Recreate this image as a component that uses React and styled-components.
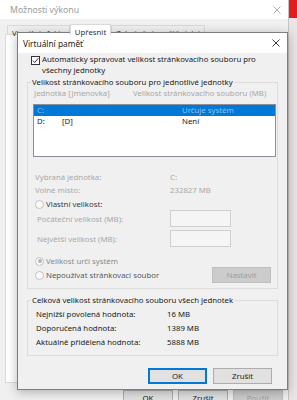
import styled, { createGlobalStyle } from 'styled-components';

const GlobalStyle = createGlobalStyle`
  html, body { margin: 0; padding: 0; }
  body {
    width: 297px;
    height: 400px;
    overflow: hidden;
    background: #ebe5e5;
    font-family: "Noto Sans", "DejaVu Sans", sans-serif;
    font-size: 7.8px;
    color: #1a1a1a;
  }
  * { box-sizing: border-box; }
`;

const Screen = styled.div`
  position: relative;
  display: flex;
  width: 297px;
  height: 400px;
  overflow: hidden;
`;

/* --- window behind (Možnosti výkonu) --- */

const BackWindow = styled.div`
  width: 289px;
  height: 420px;
  flex-shrink: 0;
  display: flex;
  flex-direction: column;
  background: #f0f0f0;
  border-right: 1px solid #c4c4c4;
`;

const BackTitleBar = styled.div`
  height: 19px;
  background: #fff;
  display: flex;
  align-items: center;
  justify-content: space-between;
  padding: 0 7px 0 10px;
  color: #9b9b9b;
  font-size: 8.7px;
`;

const TabStrip = styled.div`
  height: 15px;
  display: flex;
  align-items: flex-end;
  padding-left: 7px;
`;

const Tab = styled.div`
  height: ${({ $active }) => ($active ? 11 : 9)}px;
  margin-bottom: ${({ $active }) => ($active ? -1 : 0)}px;
  padding: 2px 4px 0;
  position: relative;
  z-index: ${({ $active }) => ($active ? 1 : 0)};
  background: ${({ $active }) => ($active ? '#fff' : '#f0f0f0')};
  border: 1px solid #d9d9d9;
  border-bottom: none;
  color: #333;
  line-height: 10px;
  white-space: nowrap;
`;

const TabPanel = styled.div`
  height: 349px;
  margin: 0 5px;
  background: #fff;
  border: 1px solid #d9d9d9;
`;

const BackButtonRow = styled.div`
  display: flex;
  justify-content: flex-end;
  gap: 5px;
  padding: 7px 5px 0 0;
`;

const Desktop = styled.div`
  flex: 1;
  display: flex;
  flex-direction: column;
  background: #ebe4e4;
`;

const DesktopBanner = styled.div`
  height: 18px;
  background: #e41e1e;
`;

/* --- dialog (Virtuální paměť) --- */

const Dialog = styled.div`
  position: absolute;
  left: 17px;
  top: 32px;
  width: 271px;
  height: 358px;
  display: flex;
  flex-direction: column;
  background: #f0f0f0;
  border: 1px solid #7d7d7d;
  box-shadow: 0 2px 10px rgba(0, 0, 0, 0.28);
`;

const DialogTitleBar = styled.div`
  height: 20px;
  flex-shrink: 0;
  background: #fff;
  display: flex;
  align-items: center;
  justify-content: space-between;
  padding: 0 7px 0 5px;
  font-size: 8.3px;
  color: #1a1a1a;
`;

const DialogBody = styled.div`
  flex: 1;
  display: flex;
  flex-direction: column;
  padding: 1px 9px 5px 9px;
`;

const CheckRow = styled.label`
  display: flex;
  align-items: flex-start;
  gap: 2px;
  padding-left: 4px;
  line-height: 11px;
`;

const CheckBox = styled.span`
  width: 9px;
  height: 9px;
  flex-shrink: 0;
  margin-top: 2px;
  background: #fff;
  border: 1px solid #333;
  display: flex;
  align-items: center;
  justify-content: center;
`;

const GroupBox = styled.fieldset`
  margin: ${({ $top }) => $top}px 0 0;
  padding: 0 ${({ $right }) => $right}px ${({ $bottom }) => $bottom}px 5px;
  border: 1px solid #dcdcdc;
  min-width: 0;
  display: flex;
  flex-direction: column;
`;

const Legend = styled.legend`
  margin-left: -2px;
  padding: 0 1px;
  line-height: 11px;
  color: #1a1a1a;
`;

const ColumnHeader = styled.div`
  display: grid;
  grid-template-columns: 99px 1fr;
  height: 11px;
  line-height: 11px;
  padding-left: 1px;
  color: #a8a8a8;
  white-space: nowrap;
`;

const ListBox = styled.div`
  margin-top: 5px;
  height: 53px;
  background: #fff;
  border: 1px solid #8a8f98;
`;

const ListRow = styled.div`
  display: grid;
  grid-template-columns: 25px 120px 1fr;
  height: 10.5px;
  line-height: 10.5px;
  padding-left: 3px;
  background: ${({ $selected }) => ($selected ? '#0078d7' : 'transparent')};
  color: ${({ $selected }) => ($selected ? '#93c0ea' : '#1a1a1a')};
`;

const InfoRow = styled.div`
  display: grid;
  grid-template-columns: ${({ $label }) => $label}px 1fr;
  align-items: center;
  height: ${({ $h }) => $h}px;
  margin-top: ${({ $top }) => $top || 0}px;
  padding-left: ${({ $indent }) => $indent}px;
  color: ${({ $muted }) => ($muted ? '#a8a8a8' : '#1a1a1a')};
  white-space: nowrap;
`;

const SizeInput = styled.div`
  width: 61px;
  height: 17px;
  background: #f5f5f5;
  border: 1px solid #cfcfcf;
`;

const RadioRow = styled.div`
  display: flex;
  align-items: center;
  gap: 2px;
  height: ${({ $h }) => $h}px;
  margin-top: ${({ $top }) => $top || 0}px;
  padding-left: 2px;
  color: ${({ $tone }) => $tone};
  white-space: nowrap;
`;

const Radio = styled.span`
  width: 9px;
  height: 9px;
  flex-shrink: 0;
  border-radius: 50%;
  background: #fafafa;
  border: 1px solid #c2c2c2;
  display: flex;
  align-items: center;
  justify-content: center;
  &::after {
    content: '';
    width: 4px;
    height: 4px;
    border-radius: 50%;
    background: ${({ $checked }) => ($checked ? '#b3b3b3' : 'transparent')};
  }
`;

const Spacer = styled.span`
  flex: 1;
`;

const Button = styled.div`
  width: ${({ $w }) => $w}px;
  height: ${({ $h }) => $h}px;
  flex-shrink: 0;
  display: flex;
  align-items: center;
  justify-content: center;
  background: ${({ $disabled }) => ($disabled ? '#cccccc' : '#e1e1e1')};
  border: ${({ $focus }) => ($focus ? '2px solid #0078d7' : '1px solid')};
  border-color: ${({ $focus, $disabled }) =>
    $focus ? '#0078d7' : $disabled ? '#bfbfbf' : '#adadad'};
  color: ${({ $disabled }) => ($disabled ? '#a0a0a0' : '#1a1a1a')};
  margin-right: ${({ $mr }) => $mr || 0}px;
`;

const DialogButtons = styled.div`
  display: flex;
  justify-content: flex-end;
  gap: 6px;
  margin-top: auto;
  padding-right: 6px;
`;

const CloseIcon = ({ color, size = 8 }) => (
  <svg width={size} height={size} viewBox="0 0 8 8">
    <path d="M0.5 0.5 L7.5 7.5 M7.5 0.5 L0.5 7.5" stroke={color} strokeWidth="0.9" fill="none" />
  </svg>
);

const CheckMark = () => (
  <svg width="7" height="7" viewBox="0 0 7 7">
    <path d="M0.8 3.6 L2.7 5.5 L6.3 1.2" stroke="#222" strokeWidth="0.9" fill="none" />
  </svg>
);

export default function App() {
  return (
    <>
      <GlobalStyle />
      <Screen>
        <BackWindow>
          <BackTitleBar>
            <span>Možnosti výkonu</span>
            <CloseIcon color="#a6a6a6" />
          </BackTitleBar>
          <TabStrip>
            <Tab>Vizuální efekty</Tab>
            <Tab $active>Upřesnit</Tab>
            <Tab>Zabránění spuštění dat</Tab>
          </TabStrip>
          <TabPanel />
          <BackButtonRow>
            <Button $w={50} $h={16}>OK</Button>
            <Button $w={50} $h={16}>Zrušit</Button>
            <Button $w={50} $h={16} $disabled>Použít</Button>
          </BackButtonRow>
        </BackWindow>
        <Desktop>
          <DesktopBanner />
        </Desktop>

        <Dialog>
          <DialogTitleBar>
            <span>Virtuální paměť</span>
            <CloseIcon color="#222" />
          </DialogTitleBar>
          <DialogBody>
            <CheckRow>
              <CheckBox><CheckMark /></CheckBox>
              <span>
                Automaticky spravovat velikost stránkovacího souboru pro
                <br />
                všechny jednotky
              </span>
            </CheckRow>

            <GroupBox $top={1} $right={1} $bottom={5}>
              <Legend>Velikost stránkovacího souboru pro jednotlivé jednotky</Legend>
              <ColumnHeader>
                <span>Jednotka [Jmenovka]</span>
                <span>Velikost stránkovacího souboru (MB)</span>
              </ColumnHeader>
              <ListBox>
                <ListRow $selected>
                  <span>C:</span>
                  <span></span>
                  <span>Určuje systém</span>
                </ListRow>
                <ListRow>
                  <span>D:</span>
                  <span>[D]</span>
                  <span>Není</span>
                </ListRow>
              </ListBox>

              <InfoRow $label={135} $indent={2} $h={12} $top={14} $muted>
                <span>Vybraná jednotka:</span>
                <span>C:</span>
              </InfoRow>
              <InfoRow $label={135} $indent={2} $h={12} $top={1} $muted>
                <span>Volné místo:</span>
                <span>232827 MB</span>
              </InfoRow>

              <RadioRow $h={12} $top={2} $tone="#3a3a3a">
                <Radio />
                <span>Vlastní velikost:</span>
              </RadioRow>
              <InfoRow $label={133} $indent={4} $h={17} $muted>
                <span>Počáteční velikost (MB):</span>
                <SizeInput />
              </InfoRow>
              <InfoRow $label={133} $indent={4} $h={17} $top={3} $muted>
                <span>Největší velikost (MB):</span>
                <SizeInput />
              </InfoRow>

              <RadioRow $h={12} $top={8} $tone="#8a8a8a">
                <Radio $checked />
                <span>Velikost určí systém</span>
              </RadioRow>
              <RadioRow $h={16} $tone="#5a5a5a">
                <Radio />
                <span>Nepoužívat stránkovací soubor</span>
                <Spacer />
                <Button $w={59} $h={16} $mr={5} $disabled>Nastavit</Button>
              </RadioRow>
            </GroupBox>

            <GroupBox $top={6} $right={5} $bottom={6}>
              <Legend>Celková velikost stránkovacího souboru všech jednotek</Legend>
              <InfoRow $label={131} $indent={3} $h={14} $top={1}>
                <span>Nejnižší povolená hodnota:</span>
                <span>16 MB</span>
              </InfoRow>
              <InfoRow $label={131} $indent={3} $h={14}>
                <span>Doporučená hodnota:</span>
                <span>1389 MB</span>
              </InfoRow>
              <InfoRow $label={131} $indent={3} $h={14}>
                <span>Aktuálně přidělená hodnota:</span>
                <span>5888 MB</span>
              </InfoRow>
            </GroupBox>

            <DialogButtons>
              <Button $w={59} $h={16} $focus>OK</Button>
              <Button $w={59} $h={16}>Zrušit</Button>
            </DialogButtons>
          </DialogBody>
        </Dialog>
      </Screen>
    </>
  );
}
